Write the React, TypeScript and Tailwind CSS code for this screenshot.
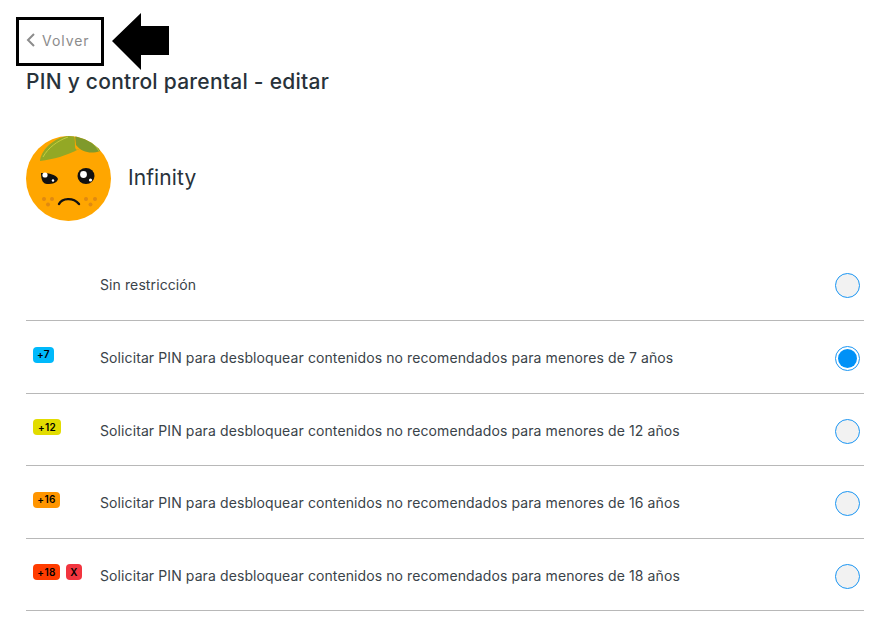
const rows = [
  { text: "Sin restricción", badges: [] as { t: string; c: string; w: string }[], on: false, h: "h-[73px]" },
  { text: "Solicitar PIN para desbloquear contenidos no recomendados para menores de 7 años", badges: [{ t: "+7", c: "bg-[#00b9fb]", w: "w-[21px]" }], on: true, h: "h-[73px]" },
  { text: "Solicitar PIN para desbloquear contenidos no recomendados para menores de 12 años", badges: [{ t: "+12", c: "bg-[#e2dc00]", w: "w-[28px]" }], on: false, h: "h-[72px]" },
  { text: "Solicitar PIN para desbloquear contenidos no recomendados para menores de 16 años", badges: [{ t: "+16", c: "bg-[#ff9500]", w: "w-[27px]" }], on: false, h: "h-[73px]" },
  { text: "Solicitar PIN para desbloquear contenidos no recomendados para menores de 18 años", badges: [{ t: "+18", c: "bg-[#ff3c00]", w: "w-[27px]" }, { t: "X", c: "bg-[#f2353f]", w: "w-4" }], on: false, h: "h-[72px]" },
];

function Avatar() {
  return (
    <svg width="85" height="85" viewBox="0 0 85 85" className="shrink-0">
      <defs>
        <clipPath id="c"><circle cx="42.5" cy="42.5" r="42.5" /></clipPath>
      </defs>
      <circle cx="42.5" cy="42.5" r="42.5" fill="#ffa600" />
      <g clipPath="url(#c)">
        <path d="M14 25 C15 14 28 0 48 -1 C49 3 49 8 49 10 C49 14 52 15 53 13 C40 20 28 23 14 25 Z" fill="#93a825" />
        <path d="M49 -1 L62 0 C68 3 73 10 74 15 C66 18 56 17 50 9 Z" fill="#7f9a2c" />
        <path d="M17 21 C22 12 31 5 42 1" fill="none" stroke="#c5cf3e" strokeWidth="1" />
        <path d="M60 1 C65 5 70 10 73 15" fill="none" stroke="#b5c437" strokeWidth="1" />
        <path d="M15 37 C22 37 30 38 32 43 C31 47 27 48 21 48 C17 48 15 44 15 37 Z" fill="#111" />
        <circle cx="19" cy="39" r="2.6" fill="#fff" />
        <circle cx="27" cy="44.5" r="1.2" fill="#fff" />
        <ellipse cx="60" cy="40" rx="8.5" ry="8" fill="#111" />
        <circle cx="57.5" cy="38.5" r="3.4" fill="#fff" />
        <circle cx="64.5" cy="44" r="1.6" fill="#fff" />
        <path d="M33 68 C36 62 47 61 53 68" fill="none" stroke="#111" strokeWidth="2.4" strokeLinecap="round" />
        <g fill="#e08a10">
          <circle cx="18" cy="63" r="2" /><circle cx="26" cy="63" r="2" /><circle cx="22" cy="68.5" r="2" />
          <circle cx="60" cy="63" r="2" /><circle cx="69" cy="63" r="2" /><circle cx="64.5" cy="68.5" r="2" />
        </g>
      </g>
    </svg>
  );
}

export default function App() {
  return (
    <div className="relative w-[879px] h-[627px] overflow-hidden bg-white pl-[26px] pr-[15px] text-[#28323a] font-['Inter','Noto_Sans',sans-serif]">
      <div className="pt-[32px] h-[72px]">
        <div className="flex items-center gap-[6px] text-[14px] tracking-[0.95px] text-[#8c8c8c] h-4">
          <svg width="10" height="14" viewBox="0 0 10 14" fill="none" stroke="#8c8c8c" strokeWidth="2"><path d="M8 1 L2 7 L8 13" /></svg>
          <span>Volver</span>
        </div>
      </div>
      <h1 className="text-[21px] leading-[20px] font-medium tracking-[0.25px]">PIN y control parental - editar</h1>
      <div className="flex items-center gap-[17px] mt-[44px]">
        <Avatar />
        <span className="text-[21px] tracking-[0.1px] -translate-y-[1px]">Infinity</span>
      </div>
      <div className="mt-[27px]">
        {rows.map((r) => (
          <div key={r.text} className={`${r.h} pt-[3px] flex items-center border-b border-[#b8b8b8] box-border`}>
            <div className="w-[74px] pl-[7px] flex gap-[6px] -translate-y-[4px] shrink-0">
              {r.badges.map((b) => (
                <span key={b.t} className={`${b.w} ${b.c} h-4 rounded-[4px] flex items-center justify-center text-[10px] font-semibold tracking-[0.3px] text-black`}>{b.t}</span>
              ))}
            </div>
            <span className="flex-1 text-[14px] tracking-[0.1px] text-[#3a4349] -translate-y-[1px]">{r.text}</span>
            <span className={`w-[25px] h-[25px] mr-[4px] rounded-full border-[1.5px] border-[#1b96f3] flex items-center justify-center ${r.on ? "bg-white" : "bg-[#f2f2f2]"}`}>
              {r.on && <span className="w-[19px] h-[19px] rounded-full bg-[#0091f7]" />}
            </span>
          </div>
        ))}
      </div>
      <div className="absolute left-[16px] top-[17px] w-[88px] h-[49px] border-[3px] border-black" />
      <svg className="absolute left-[112px] top-[13px]" width="57" height="57" viewBox="0 0 57 57"><path d="M0 28 L29 0 L29 13 L57 13 L57 42 L29 42 L29 57 Z" fill="#000" /></svg>
    </div>
  );
}
